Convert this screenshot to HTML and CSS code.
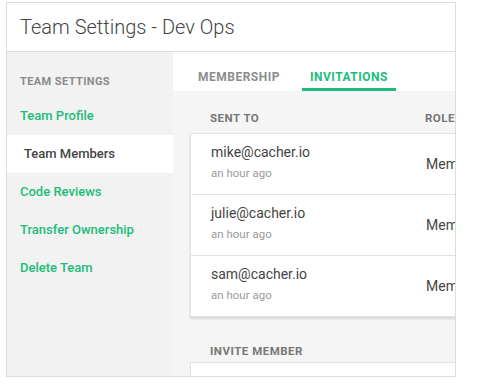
FILE: index.html
```html
<!DOCTYPE html>
<html lang="en">
<head>
    <meta charset="UTF-8">
    <title>Team Settings - Dev Ops</title>
    <link rel="stylesheet" href="styles.css">
</head>
<body>
    <div class="frame">
        <div class="header">
            <h1>Team Settings - Dev Ops</h1>
        </div>

        <div class="body">
            <div class="sidebar">
                <div class="sidebar-title">TEAM SETTINGS</div>
                <a href="#" class="nav-item">Team Profile</a>
                <a href="#" class="nav-item active">Team Members</a>
                <a href="#" class="nav-item">Code Reviews</a>
                <a href="#" class="nav-item">Transfer Ownership</a>
                <a href="#" class="nav-item">Delete Team</a>
            </div>

            <div class="main">
                <div class="tabs">
                    <a href="#" class="tab">MEMBERSHIP</a>
                    <a href="#" class="tab selected">INVITATIONS</a>
                </div>

                <div class="content">
                    <div class="table-head">
                        <div class="col-sent">SENT TO</div>
                        <div class="col-role">ROLE</div>
                    </div>

                    <div class="card">
                        <div class="row">
                            <div class="col-sent">
                                <div class="email">mike@cacher.io</div>
                                <div class="when">an hour ago</div>
                            </div>
                            <div class="col-role">Member</div>
                        </div>
                        <div class="row">
                            <div class="col-sent">
                                <div class="email">julie@cacher.io</div>
                                <div class="when">an hour ago</div>
                            </div>
                            <div class="col-role">Member</div>
                        </div>
                        <div class="row">
                            <div class="col-sent">
                                <div class="email">sam@cacher.io</div>
                                <div class="when">an hour ago</div>
                            </div>
                            <div class="col-role">Member</div>
                        </div>
                    </div>

                    <div class="section-title">INVITE MEMBER</div>
                    <div class="card invite-card"></div>
                </div>
            </div>
        </div>
    </div>
</body>
</html>
```

FILE: styles.css
```css
body {
    font-family: Roboto, 'Liberation Sans', sans-serif;
    margin: 0;
    padding: 0;
    background-color: #fff;
    color: #444;
}

.frame {
    margin: 2px 0 0 6px;
    width: 448px;
    height: 373px;
    border: 1px solid #dcdcdc;
    overflow: hidden;
    display: flex;
    flex-direction: column;
}

.header {
    height: 48px;
    border-bottom: 1px solid #dcdcdc;
    display: flex;
    align-items: center;
    padding-left: 13px;
    flex-shrink: 0;
}

h1 {
    margin: 0;
    font-size: 20px;
    font-weight: 300;
    color: #444;
}

.body {
    display: flex;
    flex: 1;
    min-height: 0;
}

.sidebar {
    width: 166px;
    flex-shrink: 0;
    background-color: #f2f2f2;
    padding-top: 23px;
}

.sidebar-title {
    font-size: 11px;
    font-weight: bold;
    color: #8a8a8a;
    letter-spacing: 0.4px;
    padding-left: 13px;
    margin-bottom: 9px;
}

.nav-item {
    display: block;
    height: 38px;
    line-height: 38px;
    padding-left: 13px;
    font-size: 13px;
    font-weight: 500;
    color: #1cbd7a;
    text-decoration: none;
}

.nav-item.active {
    background-color: #fff;
    color: #444;
    padding-left: 17px;
}

.main {
    flex: 1;
    min-width: 0;
    display: flex;
    flex-direction: column;
}

.tabs {
    height: 39px;
    background-color: #fff;
    display: flex;
    padding-left: 17px;
    flex-shrink: 0;
}

.tab {
    display: flex;
    align-items: center;
    padding: 13px 8px 0;
    font-size: 12px;
    font-weight: bold;
    letter-spacing: 0.5px;
    color: #8c8c8c;
    text-decoration: none;
    border-bottom: 3px solid transparent;
    margin-right: 14px;
}

.tab.selected {
    color: #1cbd7a;
    border-bottom-color: #1cbd7a;
}

.content {
    flex: 1;
    background-color: #f5f5f5;
    padding-left: 17px;
}

.table-head {
    display: flex;
    height: 42px;
    align-items: flex-end;
    font-size: 11.5px;
    font-weight: bold;
    letter-spacing: 0.5px;
    color: #777;
}

.table-head > div {
    margin-bottom: 8px;
}

.col-sent {
    width: 215px;
    padding-left: 20px;
    flex-shrink: 0;
}

.col-role {
    white-space: nowrap;
}

.card {
    width: 320px;
    background-color: #fff;
    border: 1px solid #e2e2e2;
    box-shadow: 0 2px 2px rgba(0, 0, 0, 0.12);
}

.row {
    display: flex;
    align-items: center;
    height: 60px;
    border-bottom: 1px solid #e2e2e2;
}

.row:last-child {
    border-bottom: none;
}

.row .col-sent {
    padding-bottom: 4px;
}

.row .col-role {
    font-size: 14px;
    color: #444;
}

.email {
    font-size: 14px;
    color: #444;
}

.when {
    font-size: 11.5px;
    color: #9a9a9a;
    margin-top: 6px;
}

.section-title {
    margin-top: 27px;
    padding-left: 20px;
    font-size: 11.5px;
    font-weight: bold;
    letter-spacing: 0.5px;
    color: #777;
    height: 18px;
}

.invite-card {
    height: 40px;
    box-shadow: none;
}
```
